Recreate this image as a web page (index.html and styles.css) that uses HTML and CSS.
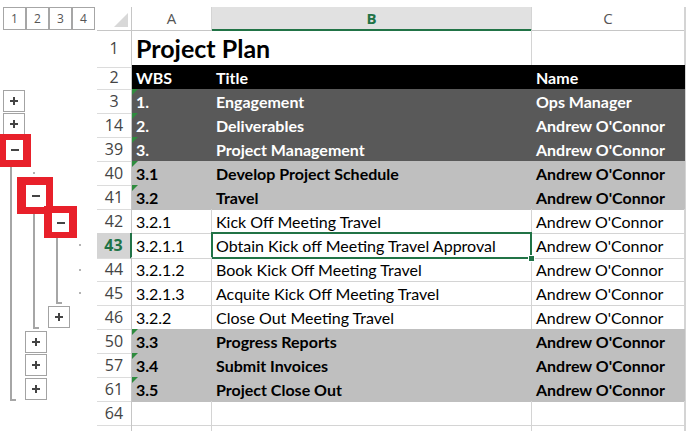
FILE: index.html
```html
<!DOCTYPE html>
<html lang="en">
<head>
    <meta charset="UTF-8">
    <meta name="viewport" content="width=device-width, initial-scale=1.0">
    <title>Project Plan | Outline</title>
    <link rel="stylesheet" href="styles.css">
</head>
<body>
    <div class="window">
        <!-- Outline gutter -->
        <div class="gutter">
            <div class="levels">
                <span class="lvl">1</span>
                <span class="lvl">2</span>
                <span class="lvl">3</span>
                <span class="lvl">4</span>
            </div>

            <div class="vl v1"></div>
            <div class="vl v2"></div>
            <div class="vl v3"></div>

            <div class="ob plus r3"></div>
            <div class="ob plus r14"></div>
            <div class="ob plus r46"></div>
            <div class="ob plus r50"></div>
            <div class="ob plus r57"></div>
            <div class="ob plus r61"></div>

            <div class="mark m39"><div class="inner"></div></div>
            <div class="mark m41"><div class="inner"></div></div>
            <div class="mark m42"><div class="inner"></div></div>

            <span class="dot d40"></span>
            <span class="dot d43"></span>
            <span class="dot d44"></span>
            <span class="dot d45"></span>
        </div>

        <!-- Sheet -->
        <div class="sheet">
            <div class="row head">
                <div class="corner"></div>
                <div class="ch">A</div>
                <div class="ch on">B</div>
                <div class="ch">C</div>
                <div class="ch pad"></div>
            </div>
            <div class="row tall">
                <div class="rh">1</div>
                <div class="cell big">Project Plan</div>
                <div class="cell"></div>
                <div class="pad"></div>
            </div>
            <div class="row black">
                <div class="rh">2</div>
                <div class="cell">WBS</div>
                <div class="cell">Title</div>
                <div class="cell">Name</div>
                <div class="pad"></div>
            </div>
            <div class="row dark">
                <div class="rh">3</div>
                <div class="cell flag">1.</div>
                <div class="cell">Engagement</div>
                <div class="cell">Ops Manager</div>
                <div class="pad"></div>
            </div>
            <div class="row dark">
                <div class="rh">14</div>
                <div class="cell flag">2.</div>
                <div class="cell">Deliverables</div>
                <div class="cell">Andrew O'Connor</div>
                <div class="pad"></div>
            </div>
            <div class="row dark">
                <div class="rh">39</div>
                <div class="cell flag">3.</div>
                <div class="cell">Project Management</div>
                <div class="cell">Andrew O'Connor</div>
                <div class="pad"></div>
            </div>
            <div class="row light">
                <div class="rh">40</div>
                <div class="cell flag">3.1</div>
                <div class="cell">Develop Project Schedule</div>
                <div class="cell">Andrew O'Connor</div>
                <div class="pad"></div>
            </div>
            <div class="row light">
                <div class="rh">41</div>
                <div class="cell flag">3.2</div>
                <div class="cell">Travel</div>
                <div class="cell">Andrew O'Connor</div>
                <div class="pad"></div>
            </div>
            <div class="row">
                <div class="rh">42</div>
                <div class="cell">3.2.1</div>
                <div class="cell">Kick Off Meeting Travel</div>
                <div class="cell">Andrew O'Connor</div>
                <div class="pad"></div>
            </div>
            <div class="row">
                <div class="rh on">43</div>
                <div class="cell">3.2.1.1</div>
                <div class="cell sel">Obtain Kick off Meeting Travel Approval</div>
                <div class="cell">Andrew O'Connor</div>
                <div class="pad"></div>
            </div>
            <div class="row">
                <div class="rh">44</div>
                <div class="cell">3.2.1.2</div>
                <div class="cell">Book Kick Off Meeting Travel</div>
                <div class="cell">Andrew O'Connor</div>
                <div class="pad"></div>
            </div>
            <div class="row">
                <div class="rh">45</div>
                <div class="cell">3.2.1.3</div>
                <div class="cell">Acquite Kick Off Meeting Travel</div>
                <div class="cell">Andrew O'Connor</div>
                <div class="pad"></div>
            </div>
            <div class="row">
                <div class="rh">46</div>
                <div class="cell">3.2.2</div>
                <div class="cell">Close Out Meeting Travel</div>
                <div class="cell">Andrew O'Connor</div>
                <div class="pad"></div>
            </div>
            <div class="row light">
                <div class="rh">50</div>
                <div class="cell flag">3.3</div>
                <div class="cell">Progress Reports</div>
                <div class="cell">Andrew O'Connor</div>
                <div class="pad"></div>
            </div>
            <div class="row light">
                <div class="rh">57</div>
                <div class="cell flag">3.4</div>
                <div class="cell">Submit Invoices</div>
                <div class="cell">Andrew O'Connor</div>
                <div class="pad"></div>
            </div>
            <div class="row light">
                <div class="rh">61</div>
                <div class="cell flag">3.5</div>
                <div class="cell">Project Close Out</div>
                <div class="cell">Andrew O'Connor</div>
                <div class="pad"></div>
            </div>
            <div class="row">
                <div class="rh">64</div>
                <div class="cell"></div>
                <div class="cell"></div>
                <div class="cell"></div>
                <div class="pad"></div>
            </div>
            <div class="row">
                <div class="rh"></div>
                <div class="cell"></div>
                <div class="cell"></div>
                <div class="cell"></div>
                <div class="pad"></div>
            </div>
        </div>
    </div>
</body>
</html>
```

FILE: styles.css
```css
/* Global Styles */
body {
    margin: 0;
    padding: 0;
    background-color: #fff;
    color: #000;
    font-family: 'Lato', 'Open Sans', sans-serif;
    overflow: hidden;
}

.window {
    display: flex;
    height: 431px;
}

/* Outline gutter */
.gutter {
    position: relative;
    width: 97px;
    flex: none;
}

.levels {
    display: flex;
    padding: 7px 0 0 3px;
}

.lvl {
    width: 23px;
    height: 23px;
    box-sizing: border-box;
    border: 1px solid #a6a6a6;
    display: flex;
    align-items: center;
    justify-content: center;
    font-family: 'Open Sans', sans-serif;
    font-size: 12px;
    color: #555;
}

/* plus / minus buttons */
.ob {
    position: absolute;
    width: 22px;
    height: 22px;
    box-sizing: border-box;
    border: 1px solid #a3a3a3;
    background-color: #fff;
}
.ob::before,
.mark .inner::before {
    content: '';
    position: absolute;
    left: 50%;
    top: 50%;
    width: 8px;
    height: 2px;
    margin: -1px 0 0 -4px;
    background-color: #444;
}
.ob.plus::after {
    content: '';
    position: absolute;
    left: 50%;
    top: 50%;
    width: 2px;
    height: 8px;
    margin: -4px 0 0 -1px;
    background-color: #444;
}
.r3 { left: 3px; top: 90px; }
.r14 { left: 3px; top: 113px; }
.r46 { left: 48px; top: 306px; }
.r50 { left: 25px; top: 331px; }
.r57 { left: 25px; top: 354px; }
.r61 { left: 25px; top: 378px; }

/* red highlight around the expanded groups */
.mark {
    position: absolute;
    background-color: #e8202a;
}
.mark .inner {
    position: absolute;
    background-color: #fff;
}
.m39 { left: 0; top: 134px; width: 31px; height: 33px; }
.m39 .inner { left: 6px; top: 6px; width: 17px; height: 20px; }
.m41 { left: 17px; top: 177px; width: 36px; height: 37px; }
.m41 .inner { left: 9px; top: 8px; width: 20px; height: 22px; }
.m42 { left: 44px; top: 206px; width: 33px; height: 32px; }
.m42 .inner { left: 8px; top: 7px; width: 17px; height: 19px; }

/* group bracket lines */
.vl {
    position: absolute;
    width: 2px;
    background-color: #a6a6a6;
}
.vl::after {
    content: '';
    position: absolute;
    left: 0;
    bottom: 0;
    width: 6px;
    height: 2px;
    background-color: #a6a6a6;
}
.v1 { left: 10px; top: 167px; height: 234px; }
.v2 { left: 33px; top: 214px; height: 115px; }
.v3 { left: 56px; top: 238px; height: 66px; }

.dot {
    position: absolute;
    width: 2px;
    height: 2px;
    background-color: #b4b4b4;
}
.d40 { left: 33px; top: 172px; }
.d43 { left: 79px; top: 244px; }
.d44 { left: 79px; top: 269px; }
.d45 { left: 79px; top: 292px; }

/* Sheet */
.sheet {
    flex: 1;
    padding-top: 7px;
}

.row {
    display: grid;
    grid-template-columns: 35px 80px 320px 153px 1fr;
    height: 24px;
}
.row.head { height: 23px; }
.row.tall { height: 35px; }

.corner,
.ch,
.rh,
.cell,
.pad {
    box-sizing: border-box;
    border-right: 1px solid #d4d4d4;
    border-bottom: 1px solid #d4d4d4;
}

/* column headers */
.corner {
    position: relative;
    border-bottom-color: #c6c6c6;
    border-right-color: #c6c6c6;
}
.corner::after {
    content: '';
    position: absolute;
    right: 3px;
    bottom: 3px;
    border-left: 14px solid transparent;
    border-bottom: 14px solid #d8d8d8;
}
.ch {
    font-family: 'Open Sans', sans-serif;
    font-size: 15px;
    color: #555;
    text-align: center;
    line-height: 22px;
    border-bottom-color: #c6c6c6;
}
.ch.on {
    background-color: #e1e1e1;
    color: #217346;
    font-weight: bold;
    border-bottom: 2px solid #217346;
}

/* row headers */
.rh {
    font-family: 'Open Sans', sans-serif;
    font-size: 16px;
    color: #444;
    text-align: center;
    line-height: 24px;
    border-right-color: #c6c6c6;
    border-bottom-color: #dcdcdc;
}
.row.tall .rh { line-height: 36px; }
.rh.on {
    background-color: #d4d4d4;
    color: #217346;
    font-weight: bold;
    border-right: 2px solid #217346;
}

/* cells */
.cell {
    position: relative;
    padding: 0 4px;
    font-size: 16px;
    line-height: 25px;
    white-space: nowrap;
    overflow: hidden;
}
.cell.big {
    grid-column: span 2;
    font-size: 25px;
    font-weight: bold;
    line-height: 37px;
    overflow: visible;
}

.row.black .cell {
    background-color: #000;
    border-color: #000;
    color: #fff;
    font-weight: bold;
}
.row.dark .cell {
    background-color: #595959;
    border-color: #595959;
    color: #fff;
    font-weight: bold;
}
.row.light .cell {
    background-color: #bfbfbf;
    border-color: #bfbfbf;
    font-weight: bold;
}

/* number stored as text marker */
.cell.flag::before {
    content: '';
    position: absolute;
    left: 0;
    top: 0;
    border-top: 6px solid #2e8b3e;
    border-right: 6px solid transparent;
}

/* active cell */
.cell.sel {
    overflow: visible;
}
.cell.sel::after {
    content: '';
    position: absolute;
    left: -1px;
    top: -1px;
    right: -1px;
    bottom: -1px;
    border: 2px solid #217346;
}
.cell.sel::before {
    content: '';
    position: absolute;
    right: -4px;
    bottom: -4px;
    width: 5px;
    height: 5px;
    background-color: #217346;
    border: 1px solid #fff;
    z-index: 1;
}
```
